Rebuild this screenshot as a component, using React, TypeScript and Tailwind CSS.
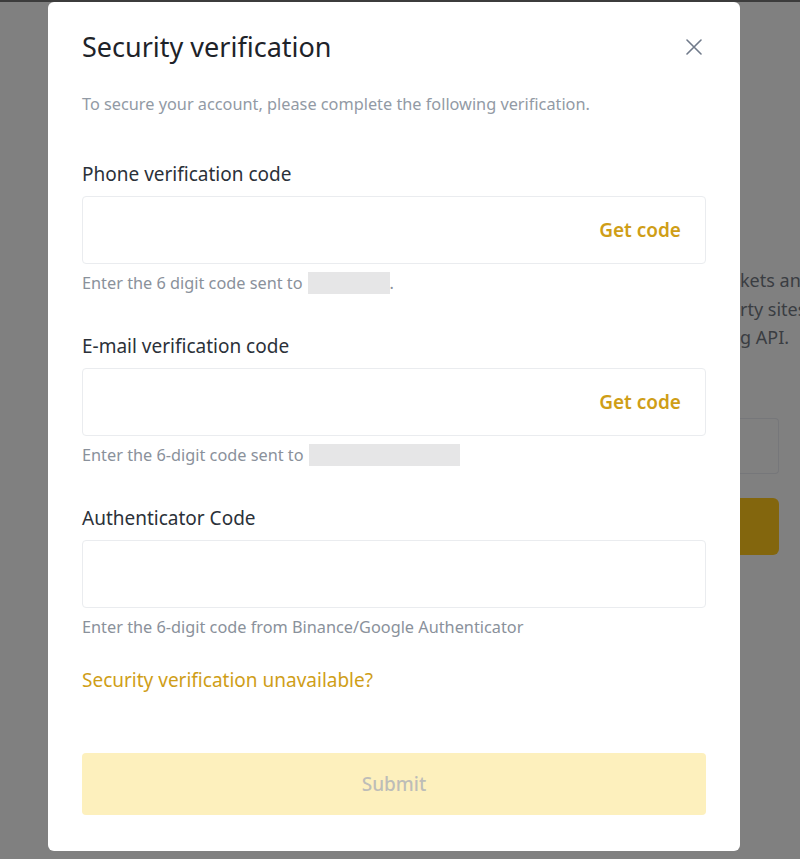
import React, { useState } from "react";

const font = { fontFamily: '"Noto Sans", "Liberation Sans", sans-serif' };

function Field({ label, hint, action, mask }: { label: string; hint: string; action?: string; mask?: { width: string; dot?: boolean } }) {
    const [value, setValue] = useState("");

    return (
        <div className="flex flex-col">
            <label className="text-[19px] leading-[24px] text-[#2b3139]">{label}</label>
            <div className="mt-[10px] flex h-[68px] items-center rounded-[4px] border border-[#eaecef] bg-white pl-4 pr-[24px]">
                <input
                    className="h-full flex-1 bg-transparent text-[18px] text-[#1e2329] outline-none"
                    value={value}
                    onChange={(e) => setValue(e.target.value)}
                />
                {action && (
                    <button className="text-[19px] font-semibold text-[#cf9e17]">{action}</button>
                )}
            </div>
            <p className="mt-[9px] flex h-[20px] items-center text-[16.3px] leading-[20px] text-[#8a919b]">
                <span>{hint}</span>
                {mask && (
                    <>
                        <span className={`ml-[5px] inline-block h-[22px] shrink-0 bg-[#e6e6e7] ${mask.width}`} />
                        {mask.dot && <span>.</span>}
                    </>
                )}
            </p>
        </div>
    );
}

export default function App() {
    return (
        <div className="relative h-[859px] w-full overflow-hidden bg-[#808080]" style={font}>
            <div className="h-[2px] bg-[#3c3c3c]" />

            {/* page behind the overlay */}
            <div className="flex justify-end">
                <div className="w-[60px] pt-[264px]">
                    <div className="whitespace-nowrap text-[18px] leading-[28.5px] text-[#3a3d42]">
                        <div>kets and</div>
                        <div>rty sites</div>
                        <div>g API.</div>
                    </div>
                    <div className="mt-[66px] h-[56px] w-[39px] rounded-r-[4px] border border-l-0 border-[#76777a]" />
                    <div className="mt-[24px] h-[57px] w-[39px] rounded-r-[6px] bg-[#83660d]" />
                </div>
            </div>

            {/* modal */}
            <div className="absolute left-[48px] top-[2px] flex h-[849px] w-[692px] flex-col rounded-[6px] bg-white px-[34px] pt-[29px] pb-[36px]">
                <div className="flex items-center justify-between">
                    <h1 className="text-[27px] leading-[32px] text-[#1e2329]">Security verification</h1>
                    <button className="mr-[4px] text-[#707a8a]">
                        <svg width="16" height="16" viewBox="0 0 16 16" fill="none" stroke="currentColor" strokeWidth="1.6" strokeLinecap="round">
                            <path d="M1 1L15 15M15 1L1 15" />
                        </svg>
                    </button>
                </div>

                <p className="mt-[31px] text-[16.3px] leading-[20px] text-[#929aa5]">
                    To secure your account, please complete the following verification.
                </p>

                <div className="mt-[48px] flex flex-col gap-[41px]">
                    <Field
                        label="Phone verification code"
                        hint="Enter the 6 digit code sent to"
                        action="Get code"
                        mask={{ width: "w-[82px]", dot: true }}
                    />
                    <Field
                        label="E-mail verification code"
                        hint="Enter the 6-digit code sent to"
                        action="Get code"
                        mask={{ width: "w-[151px]" }}
                    />
                    <Field
                        label="Authenticator Code"
                        hint="Enter the 6-digit code from Binance/Google Authenticator"
                    />
                </div>

                <a className="mt-[31px] text-[19px] leading-[24px] text-[#cf9e17]" href="#">
                    Security verification unavailable?
                </a>

                <button className="mt-auto h-[62px] w-full rounded-[4px] bg-[#fdf0bd] text-[19px] font-medium text-[#bdbdb8]" disabled>
                    Submit
                </button>
            </div>
        </div>
    );
}
